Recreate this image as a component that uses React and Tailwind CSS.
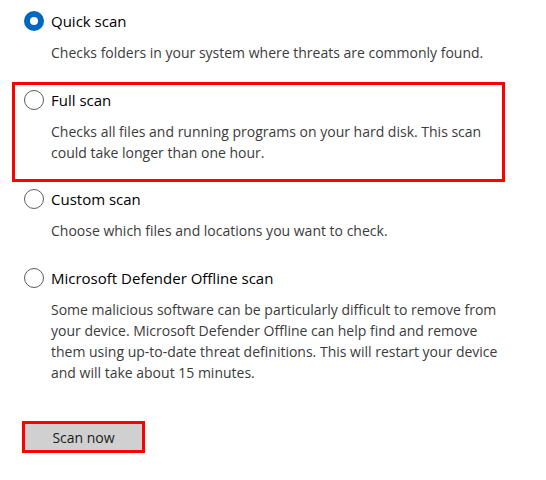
const options = [
  {
    id: "quick",
    label: "Quick scan",
    lines: ["Checks folders in your system where threats are commonly found."],
  },
  {
    id: "full",
    label: "Full scan",
    lines: [
      "Checks all files and running programs on your hard disk. This scan",
      "could take longer than one hour.",
    ],
  },
  {
    id: "custom",
    label: "Custom scan",
    lines: ["Choose which files and locations you want to check."],
  },
  {
    id: "offline",
    label: "Microsoft Defender Offline scan",
    lines: [
      "Some malicious software can be particularly difficult to remove from",
      "your device. Microsoft Defender Offline can help find and remove",
      "them using up-to-date threat definitions. This will restart your device",
      "and will take about 15 minutes.",
    ],
  },
];

const Radio = ({ checked }) =>
  checked ? (
    <span className="w-[20px] h-[20px] rounded-full bg-[#0067c0] flex items-center justify-center shrink-0">
      <span className="w-[8px] h-[8px] rounded-full bg-white"></span>
    </span>
  ) : (
    <span className="w-[20px] h-[20px] rounded-full border border-[#5c5c5c] bg-white shrink-0"></span>
  );

const Option = ({ opt, checked }) => (
  <div>
    <div className="flex items-center gap-[7px] h-[20px]">
      <Radio checked={checked} />
      <span className="text-[15px] text-black leading-[20px]">{opt.label}</span>
    </div>
    <div className="mt-[11px] pl-[27px] text-[14px] leading-[21px] text-[#3b3b3b]">
      {opt.lines.map((l) => (
        <p key={l} className="whitespace-nowrap">{l}</p>
      ))}
    </div>
  </div>
);

export default function App() {
  const [quick, full, custom, offline] = options;
  return (
    <div
      className="w-[546px] h-[480px] bg-white pl-[24px] pt-[11px]"
      style={{ fontFamily: '"Open Sans", "Noto Sans", sans-serif' }}
    >
      <Option opt={quick} checked />
      <div className="-ml-[12px] mt-[19px] w-[493px] border-[3px] border-[#ff0000] pl-[9px] pt-[5px] pb-[16px]">
        <Option opt={full} />
      </div>
      <div className="mt-[7px]">
        <Option opt={custom} />
      </div>
      <div className="mt-[27px]">
        <Option opt={offline} />
      </div>
      <div className="mt-[38px] -ml-[2px] w-[123px] border-[3px] border-[#ff0000]">
        <button className="w-full h-[26px] bg-[#d0d0d0] text-[14px] text-[#1b1b1b]">
          Scan now
        </button>
      </div>
    </div>
  );
}
